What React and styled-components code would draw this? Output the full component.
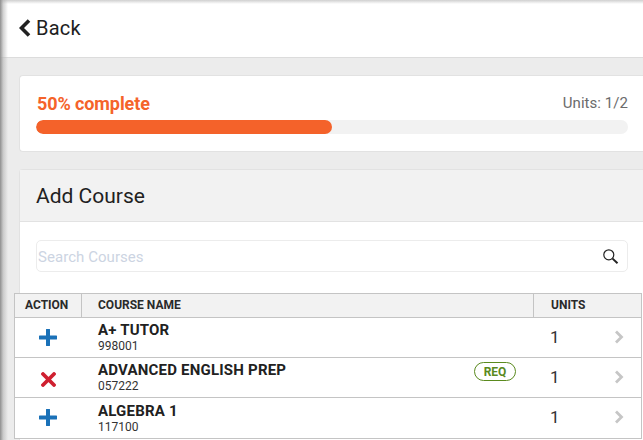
import React from 'react';
import styled, { createGlobalStyle } from 'styled-components';

const Global = createGlobalStyle`
  html, body { margin: 0; padding: 0; width: 643px; height: 440px; overflow: hidden; background: #ececec; }
  * { box-sizing: border-box; }
  body { font-family: Roboto, "Liberation Sans", sans-serif; color: #212121; }
`;

const Page = styled.div`
  position: relative;
  width: 643px;
  height: 440px;
  overflow: hidden;
  background: #ececec;
`;
const EdgeShadow = styled.div`
  position: absolute;
  left: 0; top: 0; bottom: 0;
  width: 8px;
  background: linear-gradient(to right, #8f8f8f, rgba(180,180,180,.6) 40%, rgba(236,236,236,0));
  pointer-events: none;
  z-index: 3;
`;
const TopShadow = styled.div`
  position: absolute;
  left: 0; right: 0; top: 0;
  height: 4px;
  background: linear-gradient(to bottom, rgba(150,150,150,.45), rgba(255,255,255,0));
  pointer-events: none;
  z-index: 2;
`;
const Header = styled.header`
  height: 58px;
  background: #fff;
  border-bottom: 1px solid #dcdcdc;
  display: flex;
  align-items: center;
  gap: 5px;
  padding: 0 0 1px 19px;
`;
const BackText = styled.span`
  font-size: 20px;
  line-height: 24px;
  letter-spacing: .2px;
  color: #212121;
`;
const Main = styled.main`
  padding: 17px 0 0 19px;
  display: flex;
  flex-direction: column;
  gap: 17px;
`;
const ProgressCard = styled.section`
  height: 77px;
  background: #fff;
  border: 1px solid #e2e2e2;
  border-right: none;
  border-radius: 4px 0 0 4px;
  padding: 16px 15px 0 16px;
`;
const ProgressTop = styled.div`
  display: flex;
  justify-content: space-between;
  align-items: flex-start;
  height: 28px;
`;
const Percent = styled.span`
  font-size: 18px;
  line-height: 24px;
  font-weight: 700;
  letter-spacing: -.1px;
  margin-left: 1px;
  color: #f5632a;
`;
const Units = styled.span`
  font-size: 15px;
  line-height: 22px;
  letter-spacing: .05px;
  color: #6b6b6b;
`;
const Track = styled.div`
  height: 14px;
  border-radius: 7px;
  background: #f2f2f2;
  overflow: hidden;
`;
const Fill = styled.div`
  height: 100%;
  border-radius: 7px;
  background: #f4622a;
`;
const CoursePanel = styled.section`
  background: #fff;
  border: 1px solid #e2e2e2;
  border-right: none;
  border-radius: 4px 0 0 0;
  height: 300px;
`;
const PanelHead = styled.div`
  height: 52px;
  background: #f2f2f2;
  border-bottom: 1px solid #e2e2e2;
  display: flex;
  align-items: center;
  padding-left: 16px;
`;
const PanelTitle = styled.h2`
  margin: 0;
  font-size: 21px;
  font-weight: 400;
  color: #212121;
`;
const SearchWrap = styled.div`
  padding: 18px 15px 21px 16px;
`;
const SearchBox = styled.div`
  height: 32px;
  border: 1px solid #ececec;
  border-radius: 5px;
  display: flex;
  align-items: center;
  justify-content: space-between;
  padding: 0 8px 0 0;
  background: #fff;
`;
const SearchInput = styled.input`
  border: none;
  outline: none;
  flex: 1;
  font: 400 15px Roboto, sans-serif;
  letter-spacing: .05px;
  padding: 2px 0 0 1px;
  background: transparent;
  &::placeholder { color: #ccd4e2; opacity: 1; }
`;
const Table = styled.div`
  margin: 0 1px 0 -6px;
  border: 1px solid #c4c4c4;
  border-bottom: none;
  background: #fff;
`;
const cols = '66px 1fr 108px';
const HeadRow = styled.div`
  display: grid;
  grid-template-columns: ${cols};
  height: 24px;
  background: #f2f2f2;
  border-bottom: 1px solid #c4c4c4;
`;
const HeadCell = styled.div`
  font-size: 12px;
  font-weight: 700;
  line-height: 23px;
  color: #2a2a2a;
  padding-left: ${p => p.$pad}px;
  border-left: ${p => (p.$divider ? '1px solid #c4c4c4' : 'none')};
`;
const Row = styled.div`
  display: grid;
  grid-template-columns: ${cols};
  height: 40.2px;
  border-bottom: 1px solid #c4c4c4;
`;
const ActionCell = styled.div`
  display: flex;
  align-items: center;
  justify-content: center;
  padding-top: ${p => (p.$low ? 3 : 0)}px;
`;
const NameCell = styled.div`
  padding: 4.2px 17px 0 17px;
  display: flex;
  justify-content: space-between;
  align-items: flex-start;
`;
const CourseName = styled.div`
  font-size: 15px;
  line-height: 16.1px;
  font-weight: 700;
  color: #212121;
  letter-spacing: .2px;
`;
const CourseCode = styled.div`
  font-size: 12px;
  line-height: 14px;
  margin-top: 1px;
  color: #333;
`;
const ReqBadge = styled.span`
  display: inline-flex;
  align-items: center;
  justify-content: center;
  width: 42px;
  height: 19px;
  border: 1px solid #5a8a1e;
  border-radius: 10px;
  font-size: 12px;
  font-weight: 700;
  color: #5a8a1e;
`;
const UnitsCell = styled.div`
  display: flex;
  align-items: center;
  justify-content: space-between;
  padding: 0 17px 1px;
  font-size: 17px;
  color: #333;
`;

const ChevronLeft = () => (
  <svg width="12" height="18" viewBox="0 0 12 18">
    <path d="M10 1.5 L2.5 9 L10 16.5" fill="none" stroke="#212121" strokeWidth="3.6" />
  </svg>
);
const SearchIcon = () => (
  <svg width="17" height="17" viewBox="0 0 17 17">
    <circle cx="6.8" cy="6.8" r="5" fill="none" stroke="#222" strokeWidth="1.2" />
    <path d="M10.6 10.6 L15.5 15.3" stroke="#222" strokeWidth="2" />
  </svg>
);
const Plus = () => (
  <svg width="18" height="17" viewBox="0 0 18 17">
    <path d="M9 1 V16 M1 8.5 H17" stroke="#1a71b8" strokeWidth="4" strokeLinecap="round" />
  </svg>
);
const Cross = () => (
  <svg width="15" height="15" viewBox="0 0 15 15">
    <path d="M2 2 L13 13 M13 2 L2 13" stroke="#cf2030" strokeWidth="3.8" strokeLinecap="round" />
  </svg>
);
const Chevron = () => (
  <svg width="10" height="14" viewBox="0 0 10 14">
    <path d="M2 1.5 L7.5 7 L2 12.5" fill="none" stroke="#c6c6c6" strokeWidth="2.8" />
  </svg>
);

const courses = [
  { name: 'A+ TUTOR', code: '998001', icon: 'plus' },
  { name: 'ADVANCED ENGLISH PREP', code: '057222', icon: 'cross', req: true },
  { name: 'ALGEBRA 1', code: '117100', icon: 'plus' },
];

export default function App() {
  return (
    <Page>
      <Global />
      <EdgeShadow />
      <TopShadow />
      <Header>
        <ChevronLeft />
        <BackText>Back</BackText>
      </Header>
      <Main>
        <ProgressCard>
          <ProgressTop>
            <Percent>50% complete</Percent>
            <Units>Units: 1/2</Units>
          </ProgressTop>
          <Track>
            <Fill style={{ width: '50%' }} />
          </Track>
        </ProgressCard>
        <CoursePanel>
          <PanelHead>
            <PanelTitle>Add Course</PanelTitle>
          </PanelHead>
          <SearchWrap>
            <SearchBox>
              <SearchInput placeholder="Search Courses" />
              <SearchIcon />
            </SearchBox>
          </SearchWrap>
          <Table>
            <HeadRow>
              <HeadCell $pad={10}>ACTION</HeadCell>
              <HeadCell $pad={16} $divider>COURSE NAME</HeadCell>
              <HeadCell $pad={17} $divider>UNITS</HeadCell>
            </HeadRow>
            {courses.map(c => (
              <Row key={c.code}>
                <ActionCell $low={c.req}>{c.icon === 'plus' ? <Plus /> : <Cross />}</ActionCell>
                <NameCell>
                  <div>
                    <CourseName>{c.name}</CourseName>
                    <CourseCode>{c.code}</CourseCode>
                  </div>
                  {c.req && <ReqBadge>REQ</ReqBadge>}
                </NameCell>
                <UnitsCell>
                  <span>1</span>
                  <Chevron />
                </UnitsCell>
              </Row>
            ))}
          </Table>
        </CoursePanel>
      </Main>
    </Page>
  );
}
